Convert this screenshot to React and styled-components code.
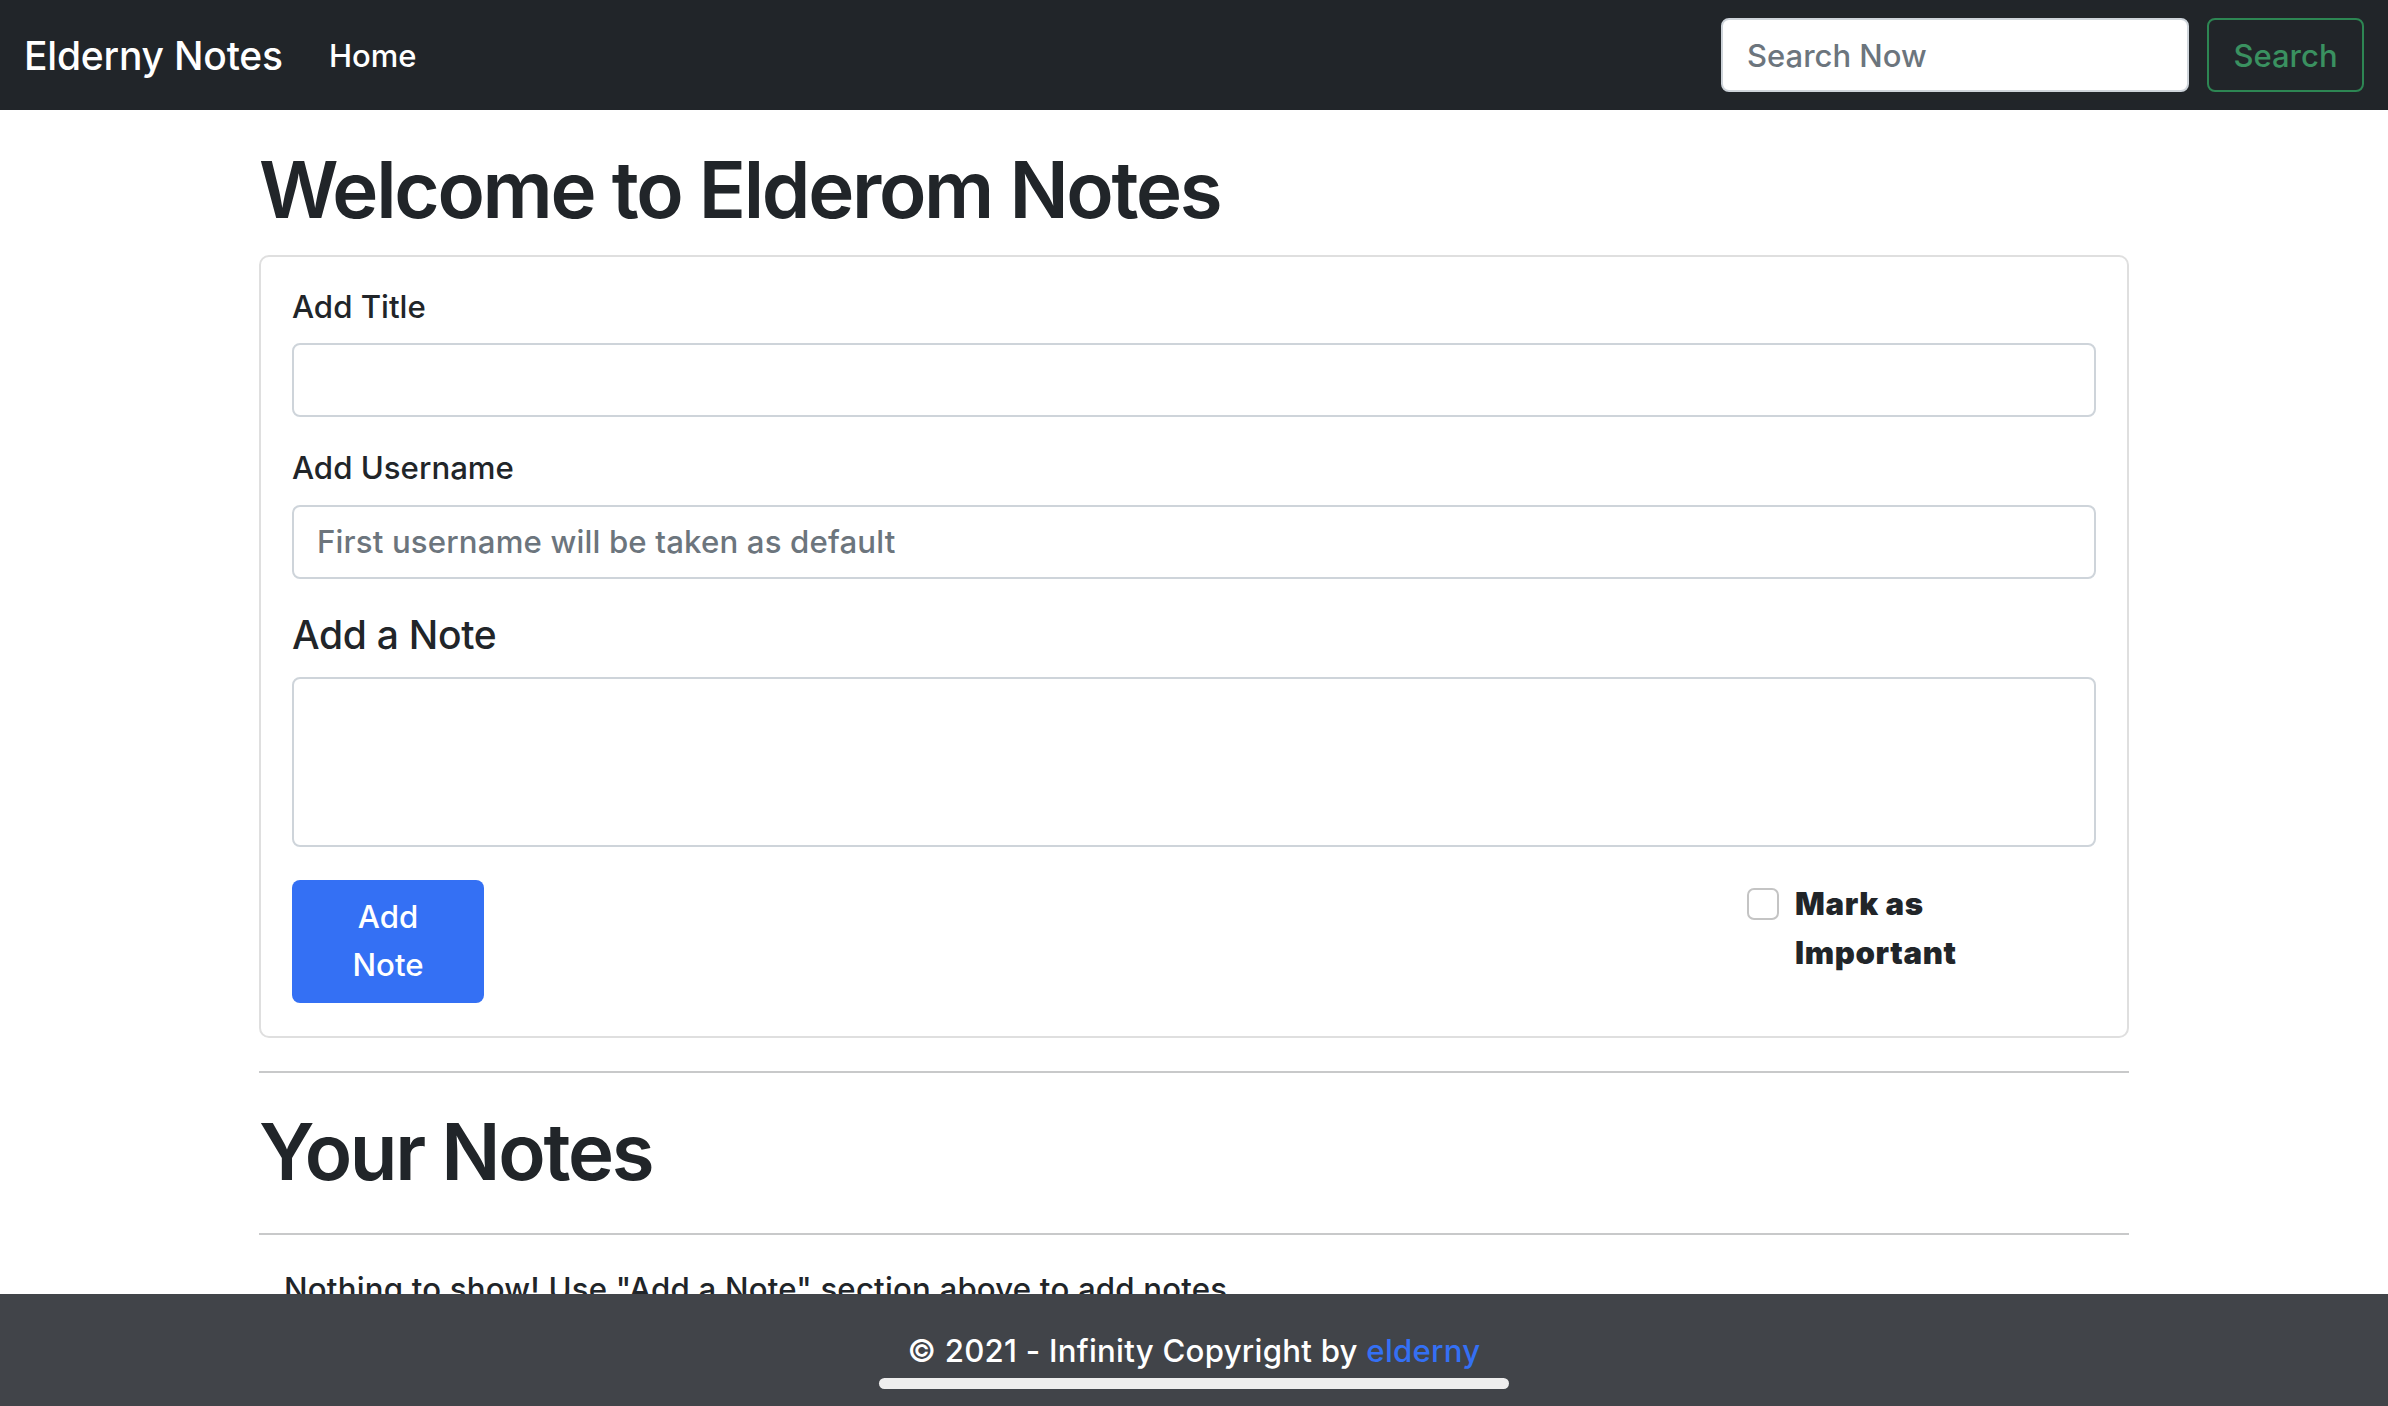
import React from "react";
import styled, { createGlobalStyle } from "styled-components";

const GlobalStyle = createGlobalStyle`
  * { box-sizing: border-box; }
  html, body { margin: 0; padding: 0; }
  body {
    font-family: Inter, "Noto Sans", "Liberation Sans", sans-serif;
    color: #212529;
    background: #ffffff;
    -webkit-font-smoothing: antialiased;
  }
`;

const Navbar = styled.nav`
  height: 110px;
  background: #212529;
  display: flex;
  align-items: center;
  justify-content: space-between;
  padding: 0 24px;
`;

const NavLeft = styled.div`
  display: flex;
  align-items: center;
`;

const Brand = styled.a`
  font-size: 39px;
  font-weight: 500;
  color: #ffffff;
  text-decoration: none;
  margin-right: 30px;
  letter-spacing: -0.2px;
`;

const NavLink = styled.a`
  font-size: 31px;
  font-weight: 500;
  color: #ffffff;
  text-decoration: none;
  padding: 0 16px;
`;

const SearchForm = styled.form`
  display: flex;
  align-items: center;
  gap: 18px;
  margin: 0;
`;

const SearchInput = styled.input`
  width: 468px;
  height: 74px;
  border: 2px solid #ced4da;
  border-radius: 8px;
  padding: 0 24px;
  font-family: inherit;
  font-size: 31px;
  font-weight: 500;
  color: #212529;
  background: #fff;
  outline: none;
  &::placeholder { color: #6c757d; }
`;

const SearchButton = styled.button`
  width: 157px;
  height: 74px;
  border: 2px solid #2d8653;
  border-radius: 8px;
  background: transparent;
  color: #3a9160;
  font-family: inherit;
  font-size: 31px;
  font-weight: 500;
  cursor: pointer;
`;

const Container = styled.main`
  width: 1870px;
  margin: 0 auto;
  padding-bottom: 120px;
`;

const Title = styled.h1`
  font-size: 78px;
  font-weight: 600;
  line-height: 1.2;
  letter-spacing: -2.3px;
  margin: ${(p) => p.$mt}px 0 ${(p) => p.$mb}px;
  color: #212529;
`;

const Card = styled.section`
  border: 2px solid #dfdfdf;
  border-radius: 10px;
  padding: 27px 31px 33px;
`;

const Field = styled.div`
  display: flex;
  flex-direction: column;
  margin-bottom: ${(p) => p.$mb}px;
`;

const Label = styled.label`
  font-size: 31.2px;
  font-weight: 500;
  line-height: 1.5;
  margin-bottom: 13px;
`;

const NoteLabel = styled.label`
  font-size: 39px;
  font-weight: 500;
  line-height: 1.2;
  letter-spacing: -0.3px;
  margin-bottom: 18px;
`;

const TextInput = styled.input`
  height: 74px;
  border: 2px solid #ced4da;
  border-radius: 8px;
  padding: 0 23px;
  font-family: inherit;
  font-size: 31.2px;
  font-weight: 500;
  letter-spacing: 0.15px;
  color: #212529;
  outline: none;
  &::placeholder { color: #6c757d; }
`;

const TextArea = styled.textarea`
  height: 170px;
  border: 2px solid #ced4da;
  border-radius: 8px;
  padding: 12px 23px;
  font-family: inherit;
  font-size: 31.2px;
  resize: none;
  outline: none;
`;

const ActionRow = styled.div`
  display: flex;
  align-items: flex-start;
`;

const PrimaryButton = styled.button`
  width: 192px;
  height: 123px;
  border: none;
  border-radius: 8px;
  background: #3470f4;
  color: #ffffff;
  font-family: inherit;
  font-size: 31.2px;
  font-weight: 500;
  line-height: 1.56;
  cursor: pointer;
  display: flex;
  align-items: center;
  justify-content: center;
`;

const ButtonText = styled.span`
  display: block;
  width: min-content;
  text-align: center;
`;

const CheckWrap = styled.label`
  margin-left: auto;
  margin-right: 119px;
  width: 230px;
  display: flex;
  align-items: flex-start;
  gap: 16px;
`;

const CheckBox = styled.input`
  appearance: none;
  -webkit-appearance: none;
  flex: 0 0 auto;
  width: 32px;
  height: 32px;
  margin: 8px 0 0;
  border: 2px solid #c4c4c4;
  border-radius: 7px;
  background: #fff;
`;

const CheckText = styled.span`
  font-size: 31.2px;
  font-weight: 900;
  line-height: 1.56;
  letter-spacing: 0.6px;
  color: #212529;
`;

const Rule = styled.hr`
  border: none;
  border-top: 2px solid #c8c9ca;
  margin: ${(p) => p.$mt}px 0 ${(p) => p.$mb}px;
`;

const EmptyText = styled.p`
  font-size: 31.2px;
  font-weight: 500;
  line-height: 1.5;
  letter-spacing: 0.2px;
  margin: 0;
  padding-left: 25px;
`;

const Footer = styled.footer`
  position: fixed;
  left: 0;
  right: 0;
  bottom: 0;
  height: 112px;
  background: #414449;
  display: flex;
  flex-direction: column;
  align-items: center;
  padding-top: 34px;
`;

const FooterText = styled.p`
  margin: 0;
  font-size: 31.2px;
  font-weight: 500;
  line-height: 1.5;
  letter-spacing: 0.25px;
  color: #ffffff;
`;

const FooterLink = styled.a`
  color: #3470f4;
  text-decoration: none;
`;

const FooterBar = styled.div`
  width: 630px;
  height: 11px;
  margin-top: 3px;
  border-radius: 6px;
  background: #eeeeee;
`;

export default function App() {
  return (
    <>
      <GlobalStyle />
      <Navbar>
        <NavLeft>
          <Brand href="#">Elderny Notes</Brand>
          <NavLink href="#">Home</NavLink>
        </NavLeft>
        <SearchForm onSubmit={(e) => e.preventDefault()}>
          <SearchInput type="search" placeholder="Search Now" />
          <SearchButton type="submit">Search</SearchButton>
        </SearchForm>
      </Navbar>
      <Container>
        <Title $mt={33} $mb={18}>Welcome to Elderom Notes</Title>
        <Card>
          <Field $mb={28}>
            <Label htmlFor="title">Add Title</Label>
            <TextInput id="title" type="text" />
          </Field>
          <Field $mb={33}>
            <Label htmlFor="user">Add Username</Label>
            <TextInput id="user" type="text" placeholder="First username will be taken as default" />
          </Field>
          <Field $mb={33}>
            <NoteLabel htmlFor="note">Add a Note</NoteLabel>
            <TextArea id="note" />
          </Field>
          <ActionRow>
            <PrimaryButton type="button">
              <ButtonText>Add Note</ButtonText>
            </PrimaryButton>
            <CheckWrap>
              <CheckBox type="checkbox" />
              <CheckText>Mark as Important</CheckText>
            </CheckWrap>
          </ActionRow>
        </Card>
        <Rule $mt={33} $mb={32} />
        <Title $mt={0} $mb={0}>Your Notes</Title>
        <Rule $mt={34} $mb={31} />
        <EmptyText>Nothing to show! Use "Add a Note" section above to add notes.</EmptyText>
      </Container>
      <Footer>
        <FooterText>
          © 2021 - Infinity Copyright by <FooterLink href="#">elderny</FooterLink>
        </FooterText>
        <FooterBar />
      </Footer>
    </>
  );
}
